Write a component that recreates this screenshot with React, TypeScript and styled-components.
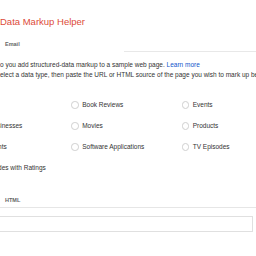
import React from "react";
import styled, { createGlobalStyle } from "styled-components";

const Global = createGlobalStyle`
  html, body { margin: 0; padding: 0; background: #fff; }
  body { font-family: "Liberation Sans", Arial, sans-serif; }
`;

const Page = styled.div`
  width: 256px;
  height: 256px;
  overflow: hidden;
  background: #fff;
  color: #333;
`;

const Title = styled.h1`
  margin: 0;
  padding-top: 16px;
  font-size: 9.5px;
  line-height: 11px;
  font-weight: normal;
  color: #dd4b39;
  white-space: nowrap;
`;

const TabBar = styled.div`
  box-sizing: border-box;
  height: 25px;
  padding-top: 14px;
  display: flex;
  align-items: flex-start;
`;

const Tab = styled.span`
  padding-left: 5px;
  font-size: 5.5px;
  line-height: 7px;
  font-weight: bold;
  color: #666;
`;

const TabRule = styled.div<{ $start?: number }>`
  align-self: flex-end;
  height: 1px;
  background: #e8e8e8;
  flex: 1;
  margin-left: ${(p) => p.$start ?? 0}px;
`;

const Intro = styled.div`
  margin-top: 7.75px;
  font-size: 6.5px;
  line-height: 10.5px;
  white-space: nowrap;
  overflow: hidden;
`;

const Line = styled.div``;

const Link = styled.a`
  color: #1155cc;
  text-decoration: none;
`;

const RadioGrid = styled.div`
  margin-top: 13.5px;
  margin-left: -39.5px;
  display: grid;
  grid-template-columns: repeat(3, 110.5px);
  grid-auto-rows: 21px;
`;

const Option = styled.label`
  display: flex;
  align-items: center;
  gap: 3.7px;
  font-size: 6.5px;
  white-space: nowrap;
  color: #333;
`;

const Radio = styled.span`
  box-sizing: border-box;
  width: 7.5px;
  height: 7.5px;
  border-radius: 50%;
  border: 1px solid #cfcfcf;
  background: #fff;
  flex: none;
`;

const SourceTabs = styled.div`
  margin-top: 18.7px;
  display: flex;
`;

const FullRule = styled.div`
  margin-top: 3px;
  height: 1px;
  background: #e6e6e6;
`;

const Input = styled.div`
  box-sizing: border-box;
  margin: 8px 3px 0 -10px;
  height: 16px;
  border: 1px solid #e0e0e0;
  background: #fff;
`;

const types = [
  "Articles",
  "Book Reviews",
  "Events",
  "Local Businesses",
  "Movies",
  "Products",
  "Restaurants",
  "Software Applications",
  "TV Episodes",
  "TV Episodes with Ratings",
];

export default function App() {
  return (
    <Page>
      <Global />
      <Title>Data Markup Helper</Title>
      <TabBar>
        <Tab>Email</Tab>
        <TabRule $start={104} />
      </TabBar>
      <Intro>
        <Line>
          o you add structured-data markup to a sample web page.{" "}
          <Link href="#">Learn more</Link>
        </Line>
        <Line>
          elect a data type, then paste the URL or HTML source of the page you wish to mark up below.
        </Line>
      </Intro>
      <RadioGrid>
        {types.map((t) => (
          <Option key={t}>
            <Radio />
            {t}
          </Option>
        ))}
      </RadioGrid>
      <SourceTabs>
        <Tab>HTML</Tab>
      </SourceTabs>
      <FullRule />
      <Input />
    </Page>
  );
}
